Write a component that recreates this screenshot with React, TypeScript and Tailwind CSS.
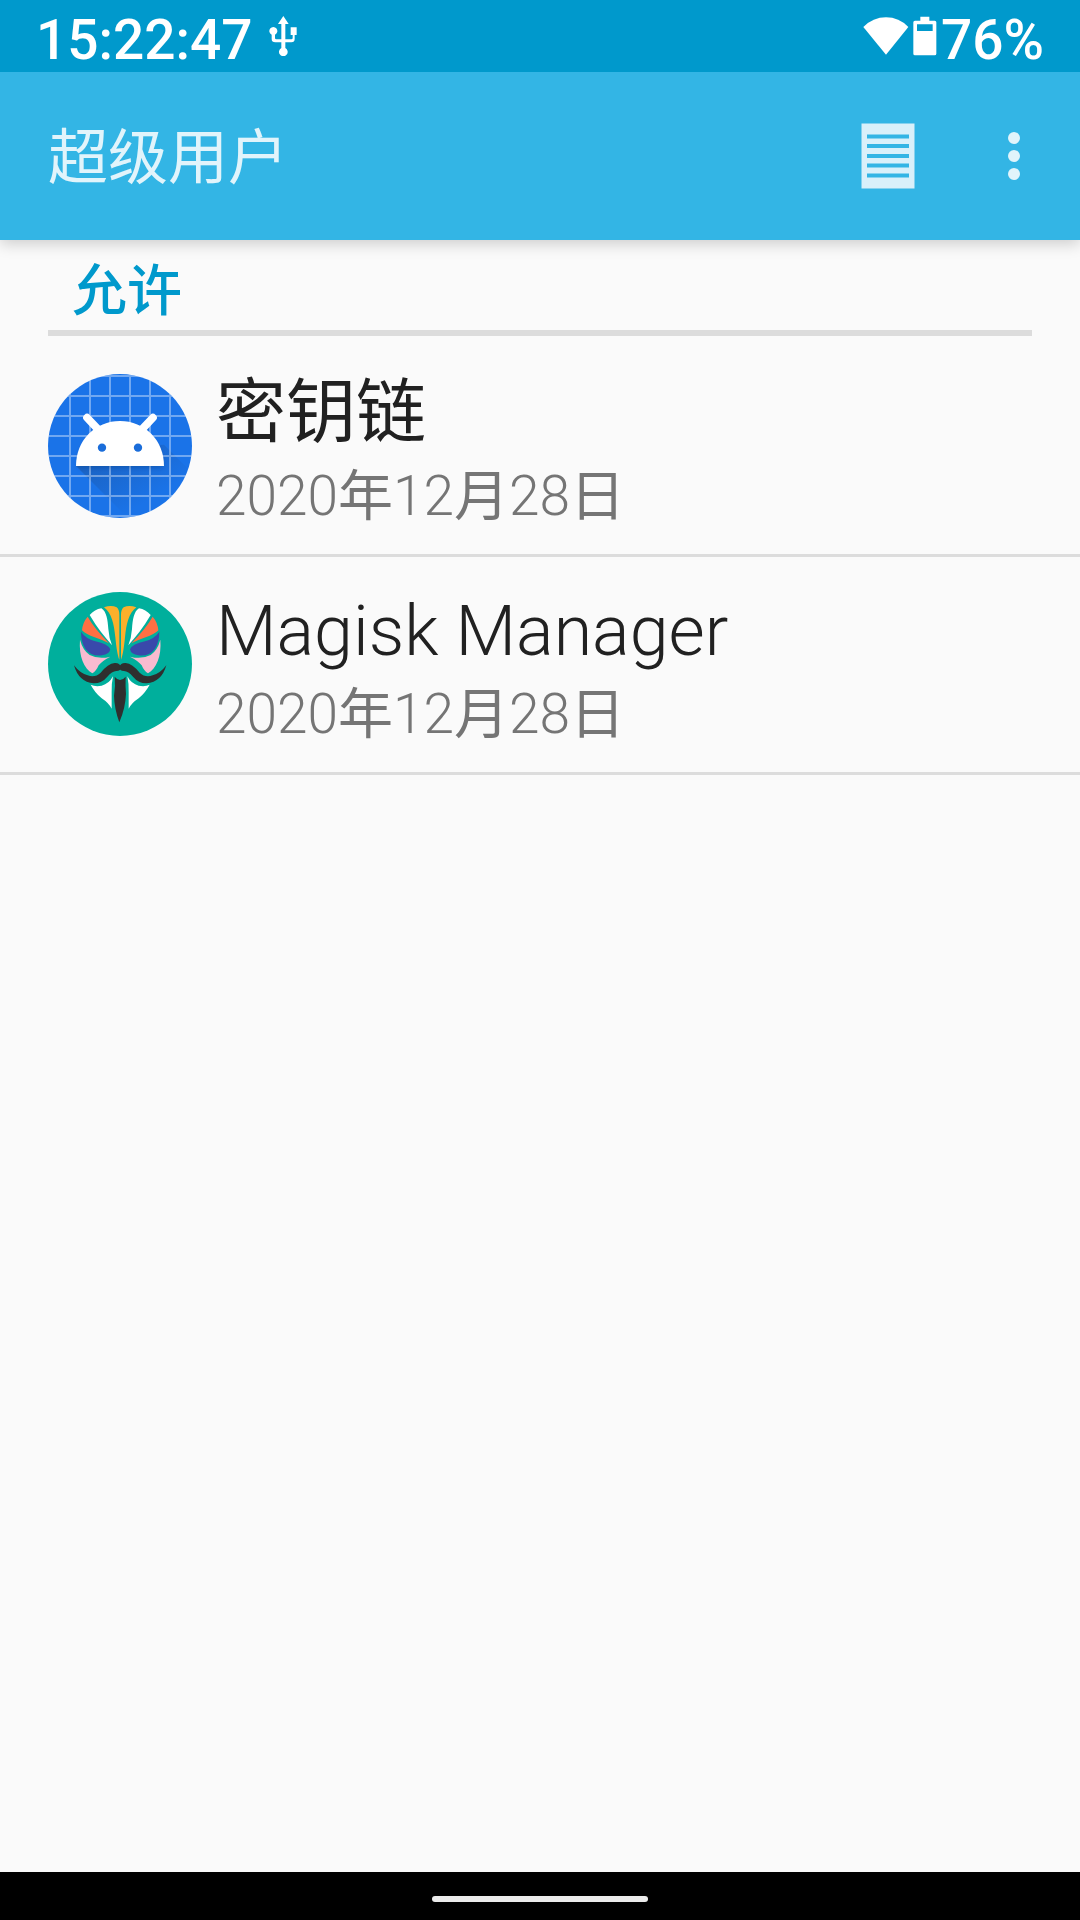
const apps = [
    { name: '密钥链', date: '2020年12月28日', Icon: AndroidIcon },
    { name: 'Magisk Manager', date: '2020年12月28日', Icon: MagiskIcon },
];

function UsbIcon() {
    return (
        <svg className="w-[28px] h-[40px]" viewBox="808 47 84 120" fill="#fff" aria-hidden="true">
            <path d="M851 47l16 24h-10v46h18q4 0 4-4v-9h-6V81h18v23h-6v12q0 10-10 10h-18v17a13 13 0 1 1-12 0v-17h-18q-11 0-11-10v-13a12 12 0 1 1 10 0v10q0 4 4 4h15V71h-10z" />
        </svg>
    );
}

function WifiIcon() {
    return (
        <svg className="w-[46px] h-[38px]" viewBox="125 49 138 114" fill="#fff" aria-hidden="true">
            <path d="M126 79Q155 50 194 50T261 79L194 162z" />
        </svg>
    );
}

function BatteryIcon() {
    return (
        <svg className="w-[24px] h-[40px]" viewBox="278 46 72 120" fill="#fff" aria-hidden="true">
            <path fillRule="evenodd" d="M300 48h27v12h16q5 0 5 5v94q0 5-5 5h-59q-5 0-5-5V65q0-5 5-5h16zM290 71v20h47V71z" />
        </svg>
    );
}

function LogIcon() {
    return (
        <svg className="w-[54px] h-[66px]" viewBox="0 0 54 66" aria-hidden="true">
            <path d="M.5.5h53v65H.5z" fill="#d9f0fa" />
            <path d="M6 13.5h42M6 23h42M6 33h42M6 42.5h42M6 52.5h42" stroke="#33b5e5" strokeWidth="4" />
        </svg>
    );
}

function MoreIcon() {
    return (
        <svg className="w-[12px] h-[48px]" viewBox="0 0 12 48" fill="#e1f4fb" aria-hidden="true">
            <circle cx="6" cy="6" r="6" />
            <circle cx="6" cy="24" r="6" />
            <circle cx="6" cy="42" r="6" />
        </svg>
    );
}

function AndroidIcon() {
    return (
        <svg className="size-36 shrink-0" viewBox="24 24 432 432" aria-hidden="true">
            <defs>
                <clipPath id="disc">
                    <circle cx="240" cy="240" r="216" />
                </clipPath>
                <linearGradient id="long-shadow" gradientUnits="userSpaceOnUse" x1="190" y1="240" x2="300" y2="420">
                    <stop offset="0" stopColor="#1b4f96" stopOpacity=".5" />
                    <stop offset="1" stopColor="#1b4f96" stopOpacity="0" />
                </linearGradient>
                <filter id="soft" x="-20%" y="-20%" width="140%" height="150%">
                    <feGaussianBlur stdDeviation="7" />
                </filter>
            </defs>
            <g clipPath="url(#disc)">
                <path d="M24 24h432v432H24z" fill="#1a73e8" />
                <path d="M108 300L264 456H456V320L372 236L300 240z" fill="url(#long-shadow)" />
                <path d="M90 24v432M150 24v432M210 24v432M270 24v432M330 24v432M390 24v432M24 30h432M24 90h432M24 150h432M24 210h432M24 270h432M24 330h432M24 390h432M24 450h432" stroke="#fff" strokeOpacity=".38" strokeWidth="6" />
                <path d="M112 304a128 128 0 0 1 256 0z" fill="#0b3b80" fillOpacity=".4" filter="url(#soft)" />
            </g>
            <path d="M141 155l35 37M339 155l-35 37" stroke="#fff" strokeWidth="23" strokeLinecap="round" />
            <path d="M108 300C108 222 166 165 240 165S372 222 372 300z" fill="#fff" />
            <circle cx="186" cy="245" r="12.5" fill="#1a6dda" />
            <circle cx="294" cy="245" r="12.5" fill="#1a6dda" />
        </svg>
    );
}

function MagiskHalf() {
    return (
        <>
            <path d="M192 70Q214 62 230 70Q238 77 238 92V227C233 215 229 190 226 160C222 120 215 88 192 70z" fill="#fbb02b" />
            <path d="M149 93Q164 76 184 73C200 83 203 108 205 135Q207 163 216 184Q198 163 183 144Q164 119 149 93z" fill="#fff" />
            <path d="M143 98Q162 132 207 178Q188 168 164 160Q138 151 126 139Q128 115 143 98z" fill="#ff7043" />
            <path d="M123 143Q136 163 166 172Q204 180 211 196Q208 211 186 214Q153 218 136 194Q123 174 123 143z" fill="#3949ab" />
            <path d="M120 167Q128 198 149 213Q176 227 211 218Q187 230 176 244Q169 261 157 268C132 253 116 218 120 167z" fill="#f8bbd0" />
            <path d="M102 244Q120 268 143 274Q165 282 182 266Q204 239 224 237Q239 236 243 249Q243 261 229 261Q216 262 202 278Q187 297 161 298Q116 294 102 244z" fill="#2f2f2f" />
            <path d="M152 302Q166 309 185 305Q207 300 219 277Q214 300 215 325V374Q205 356 185 343Q164 325 152 302z" fill="#fff" />
        </>
    );
}

function MagiskIcon() {
    return (
        <svg className="size-36 shrink-0" viewBox="24 24 432 432" aria-hidden="true">
            <circle cx="240" cy="240" r="216" fill="#00af9c" />
            <MagiskHalf />
            <g transform="matrix(-1 0 0 1 481 0)">
                <MagiskHalf />
            </g>
            <path d="M224 278Q231 287 240 288Q250 287 257 278Q256 305 258 330Q256 374 238 415Q223 374 222 335Q227 305 224 278z" fill="#2f2f2f" />
        </svg>
    );
}

// Latin and digits are light, Chinese characters stay regular
function LightText({ text }: { text: string }) {
    return text.split(/([\u4e00-\u9fff]+)/).map((part, i) => (
        <span key={i} className={i % 2 ? 'font-normal' : 'font-light'}>{part}</span>
    ));
}

export default function App() {
    return (
        <div className="min-h-screen flex flex-col bg-[#fafafa] font-[Roboto,'Noto_Sans_CJK_SC',sans-serif]">
            <div className="relative z-10 h-[72px] px-9 flex items-center justify-between bg-[#0099cc] text-white text-[55px] leading-[72px] font-medium">
                <div className="flex items-center gap-4">
                    <span className="pt-2">15:22:47</span>
                    <UsbIcon />
                </div>
                <div className="flex items-center gap-1">
                    <WifiIcon />
                    <BatteryIcon />
                    <span className="pt-2">76%</span>
                </div>
            </div>

            <header className="h-[168px] pl-12 pr-3 flex items-center bg-[#33b5e5] shadow-[0_4px_14px_rgba(0,0,0,0.18)]">
                <h1 className="flex-1 pt-1.5 text-[60px] leading-[72px] text-[#e1f4fb]">超级用户</h1>
                <button type="button" aria-label="日志" className="w-36 h-36 flex items-center justify-center">
                    <LogIcon />
                </button>
                <button type="button" aria-label="更多选项" className="w-27 h-36 flex items-center justify-center">
                    <MoreIcon />
                </button>
            </header>

            <main className="flex-1">
                <h2 className="h-24 mx-12 px-6 border-b-6 border-[#dcdcdc] text-[55px] leading-[102px] font-medium text-[#0099cc]">
                    允许
                </h2>
                <ul className="pt-[3px]">
                    {apps.map(({ name, date, Icon }) => (
                        <li key={name} className="h-[218px] px-12 pt-[35px] flex items-start gap-6 border-b-3 border-[#dcdcdc]">
                            <Icon />
                            <div>
                                <p className="text-[70px] leading-[78px] text-[#212121]"><LightText text={name} /></p>
                                <p className="text-[55px] leading-[88px] text-[#757575]"><LightText text={date} /></p>
                            </div>
                        </li>
                    ))}
                </ul>
            </main>

            <footer className="h-12 pt-1.5 flex items-center justify-center bg-black">
                <div className="w-54 h-1.5 rounded-full bg-[#ebebeb]" />
            </footer>
        </div>
    );
}
